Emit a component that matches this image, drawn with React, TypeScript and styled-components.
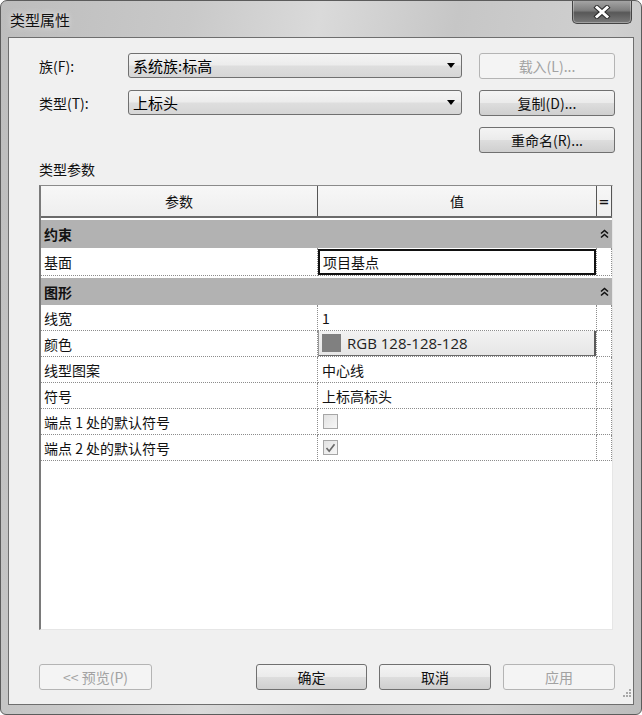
import React from "react";
import styled, { createGlobalStyle, css } from "styled-components";

const Global = createGlobalStyle`
  html, body { margin: 0; padding: 0; background: #ffffff; }
  body { font-family: "Noto Sans CJK SC", "Noto Sans", sans-serif; color: #000; }
  * { box-sizing: border-box; }
`;

const FONT = `"Noto Sans CJK SC", "Noto Sans", sans-serif`;

const Window = styled.div`
  width: 642px;
  height: 715px;
  display: flex;
  flex-direction: column;
  border: 1px solid #5c5c5c;
  border-radius: 7px 7px 6px 6px;
  background: linear-gradient(100deg, #bdbdbd 0%, #c9c9c9 25%, #dadada 42%, #c6c6c6 60%, #d0d0d0 80%, #bcbcbc 100%);
  overflow: hidden;
`;

const TitleBar = styled.div`
  height: 36px;
  flex: none;
  display: flex;
  justify-content: space-between;
  align-items: flex-start;
  padding: 0 9px 0 9px;
`;

const Title = styled.div`
  font-family: ${FONT};
  font-size: 15px;
  line-height: 15px;
  margin-top: 11px;
  color: #111;
  text-shadow: 0 0 6px rgba(255, 255, 255, 0.9);
`;

const CloseButton = styled.div`
  width: 60px;
  height: 24px;
  margin-top: -1px;
  border: 1px solid #444;
  border-top: none;
  border-radius: 0 0 5px 5px;
  background: linear-gradient(180deg, #a8a8a8 0%, #7e7e7e 45%, #585858 55%, #7a7a7a 100%);
  box-shadow: inset 0 0 0 1px rgba(255, 255, 255, 0.3);
  display: flex;
  align-items: center;
  justify-content: center;
`;

const Client = styled.div`
  position: relative;
  flex: none;
  height: 668px;
  margin: 0 7px 0 7px;
  border: 1px solid #6e6e6e;
  background: #f0f0f0;
  display: flex;
  flex-direction: column;
  padding: 15px 17px 0 29px;
`;

const TopGrid = styled.div`
  display: grid;
  grid-template-columns: 73px 334px 136px;
  grid-template-rows: repeat(3, 25px);
  column-gap: 17px;
  row-gap: 12px;
  align-items: center;
`;

const Label = styled.div`
  font-family: ${FONT};
  font-size: 14px;
  color: #111;
  white-space: nowrap;
  padding-left: 1px;
`;

const Combo = styled.div`
  height: 25px;
  border: 1px solid #707070;
  border-radius: 3px;
  background: linear-gradient(180deg, #f4f4f4 0%, #ececec 48%, #dedede 52%, #d6d6d6 100%);
  display: flex;
  align-items: center;
  justify-content: space-between;
  padding: 0 5px 0 4px;
  font-family: ${FONT};
  font-size: 15px;
  color: #000;
`;

const Arrow = styled.span`
  width: 0;
  height: 0;
  border-left: 4px solid transparent;
  border-right: 4px solid transparent;
  border-top: 5px solid #000;
  margin-right: 1px;
`;

const Button = styled.div<{ $disabled?: boolean; $w?: number }>`
  height: 26px;
  width: ${(p) => p.$w ?? 136}px;
  border: 1px solid #707070;
  border-radius: 3px;
  background: linear-gradient(180deg, #f4f4f4 0%, #ebebeb 48%, #dddddd 52%, #cfcfcf 100%);
  display: flex;
  align-items: center;
  justify-content: center;
  font-family: ${FONT};
  font-size: 14px;
  color: #111;
  white-space: nowrap;
  ${(p) =>
    p.$disabled &&
    css`
      border-color: #b4b4b4;
      background: #f4f4f4;
      color: #a2a2a2;
    `}
`;

const SectionLabel = styled.div`
  font-family: ${FONT};
  font-size: 14px;
  line-height: 20px;
  height: 20px;
  margin-top: 7px;
  padding-left: 1px;
  color: #111;
`;

const Table = styled.div`
  margin-top: 6px;
  margin-left: 1px;
  width: 574px;
  height: 445px;
  flex: none;
  border-left: 2px solid #7a7a7a;
  border-top: 1px solid #8a8a8a;
  border-right: 1px solid #e6e6e6;
  border-bottom: 1px solid #e6e6e6;
  background: #ffffff;
  display: flex;
  flex-direction: column;
`;

const COLS = "277px 279px 15px";

const HeaderRow = styled.div`
  display: grid;
  grid-template-columns: ${COLS};
  height: 32px;
  flex: none;
  background: linear-gradient(180deg, #f7f7f7 0%, #eeeeee 100%);
  border-bottom: 2px solid #6a6a6a;
`;

const HeaderCell = styled.div`
  border-right: 1px solid #555;
  display: flex;
  align-items: center;
  justify-content: center;
  font-family: ${FONT};
  font-size: 14px;
  color: #111;
`;

const EqCell = styled(HeaderCell)`
  font-size: 13px;
  font-family: "DejaVu Sans", sans-serif;
  font-weight: bold;
`;

const GroupRow = styled.div<{ $h: number; $mt: number }>`
  height: ${(p) => p.$h}px;
  margin-top: ${(p) => p.$mt}px;
  width: 571px;
  flex: none;
  background: #b2b2b2;
  display: grid;
  grid-template-columns: 556px 15px;
  align-items: center;
`;

const GroupLabel = styled.div`
  font-family: ${FONT};
  font-size: 14px;
  font-weight: bold;
  color: #111;
  padding-left: 3px;
`;

const ChevronBox = styled.div`
  display: flex;
  justify-content: center;
  align-items: center;
`;

const DataRow = styled.div<{ $h: number }>`
  display: grid;
  grid-template-columns: ${COLS};
  height: ${(p) => p.$h}px;
  flex: none;
  background: #fff;
`;

const Cell = styled.div`
  border-right: 1px dotted #8c8c8c;
  border-bottom: 1px dotted #8c8c8c;
  display: flex;
  align-items: center;
  padding-left: 3px;
  font-family: ${FONT};
  font-size: 14px;
  color: #111;
  white-space: nowrap;
  overflow: hidden;
`;

const ValueCell = styled(Cell)`
  padding-left: 4px;
`;

const EditBox = styled.div`
  height: 26px;
  width: 278px;
  margin-left: -4px;
  border: 2px solid #111;
  background: #fff;
  display: flex;
  align-items: center;
  padding-left: 3px;
  font-family: ${FONT};
  font-size: 14px;
`;

const ColorBtn = styled.div`
  height: 26px;
  width: 279px;
  margin-left: -4px;
  margin-top: 1px;
  background: linear-gradient(180deg, #f2f2f2 0%, #e6e6e6 100%);
  border-left: 1px solid #9a9a9a;
  border-right: 2px solid #5a5a5a;
  border-bottom: 2px solid #6a6a6a;
  display: flex;
  align-items: center;
  gap: 6px;
  padding-left: 3px;
  font-family: "Open Sans", "Liberation Sans", sans-serif;
  font-size: 15px;
  color: #222;
`;

const Swatch = styled.span`
  width: 19px;
  height: 18px;
  background: #808080;
  flex: none;
`;

const Check = styled.span`
  width: 15px;
  height: 15px;
  border: 1px solid #a6a6a6;
  background: linear-gradient(135deg, #e2e2e2 0%, #f7f7f7 100%);
  display: flex;
  align-items: center;
  justify-content: center;
  margin-left: 1px;
`;

const BottomRow = styled.div`
  margin-top: 34px;
  margin-left: 1px;
  display: flex;
  justify-content: space-between;
  align-items: center;
  width: 576px;
`;

const ButtonGroup = styled.div`
  display: flex;
  gap: 12px;
`;

const Grip = styled.div`
  position: absolute;
  right: 1px;
  bottom: 1px;
`;

type Row =
  | { kind: "group"; label: string; h: number; mt: number }
  | { kind: "text"; label: string; value: string; h: number }
  | { kind: "edit"; label: string; value: string; h: number }
  | { kind: "color"; label: string; value: string; h: number }
  | { kind: "check"; label: string; checked: boolean; h: number };

const rows: Row[] = [
  { kind: "group", label: "约束", h: 28, mt: 2 },
  { kind: "edit", label: "基面", value: "项目基点", h: 28 },
  { kind: "group", label: "图形", h: 27, mt: 2 },
  { kind: "text", label: "线宽", value: "1", h: 26 },
  { kind: "color", label: "颜色", value: "RGB 128-128-128", h: 26 },
  { kind: "text", label: "线型图案", value: "中心线", h: 26 },
  { kind: "text", label: "符号", value: "上标高标头", h: 26 },
  { kind: "check", label: "端点 1 处的默认符号", checked: false, h: 26 },
  { kind: "check", label: "端点 2 处的默认符号", checked: true, h: 26 },
];

const Chevrons = () => (
  <svg width="9" height="10" viewBox="0 0 9 10">
    <path d="M1 4.5 L4.5 1.5 L8 4.5" fill="none" stroke="#111" strokeWidth="1.6" />
    <path d="M1 8.5 L4.5 5.5 L8 8.5" fill="none" stroke="#111" strokeWidth="1.6" />
  </svg>
);

const CloseX = () => (
  <svg width="18" height="14" viewBox="0 0 18 14">
    <path d="M4 2.5 L14 11.5 M14 2.5 L4 11.5" stroke="#2e2e2e" strokeWidth="5" strokeLinecap="square" />
    <path d="M4 2.5 L14 11.5 M14 2.5 L4 11.5" stroke="#ffffff" strokeWidth="3" strokeLinecap="square" />
  </svg>
);

const Tick = () => (
  <svg width="11" height="10" viewBox="0 0 11 10">
    <path d="M1.5 5 L4.2 8.2 L9.5 1.2" fill="none" stroke="#6a6a6a" strokeWidth="1.7" />
  </svg>
);

const GripDots = () => (
  <svg width="10" height="10" viewBox="0 0 10 10">
    {[
      [8, 2],
      [5, 5],
      [8, 5],
      [2, 8],
      [5, 8],
      [8, 8],
    ].map(([x, y], i) => (
      <rect key={i} x={x - 1} y={y - 1} width="2" height="2" fill="#a8a8a8" />
    ))}
  </svg>
);

function renderValue(r: Row) {
  switch (r.kind) {
    case "edit":
      return <EditBox>{r.value}</EditBox>;
    case "color":
      return (
        <ColorBtn>
          <Swatch />
          {r.value}
        </ColorBtn>
      );
    case "check":
      return <Check>{r.checked && <Tick />}</Check>;
    case "text":
      return r.value;
    default:
      return null;
  }
}

export default function App() {
  return (
    <>
      <Global />
      <Window>
        <TitleBar>
          <Title>类型属性</Title>
          <CloseButton>
            <CloseX />
          </CloseButton>
        </TitleBar>
        <Client>
          <TopGrid>
            <Label>族(F):</Label>
            <Combo>
              系统族:标高
              <Arrow />
            </Combo>
            <Button $disabled>载入(L)...</Button>
            <Label>类型(T):</Label>
            <Combo>
              上标头
              <Arrow />
            </Combo>
            <Button>复制(D)...</Button>
            <span />
            <span />
            <Button>重命名(R)...</Button>
          </TopGrid>
          <SectionLabel>类型参数</SectionLabel>
          <Table>
            <HeaderRow>
              <HeaderCell>参数</HeaderCell>
              <HeaderCell>值</HeaderCell>
              <EqCell>=</EqCell>
            </HeaderRow>
            {rows.map((r, i) =>
              r.kind === "group" ? (
                <GroupRow key={i} $h={r.h} $mt={r.mt}>
                  <GroupLabel>{r.label}</GroupLabel>
                  <ChevronBox>
                    <Chevrons />
                  </ChevronBox>
                </GroupRow>
              ) : (
                <DataRow key={i} $h={r.h}>
                  <Cell>{r.label}</Cell>
                  <ValueCell>{renderValue(r)}</ValueCell>
                  <Cell />
                </DataRow>
              )
            )}
          </Table>
          <BottomRow>
            <Button $disabled $w={113}>
              &lt;&lt; 预览(P)
            </Button>
            <ButtonGroup>
              <Button $w={111}>确定</Button>
              <Button $w={112}>取消</Button>
              <Button $disabled $w={112}>
                应用
              </Button>
            </ButtonGroup>
          </BottomRow>
          <Grip>
            <GripDots />
          </Grip>
        </Client>
      </Window>
    </>
  );
}
